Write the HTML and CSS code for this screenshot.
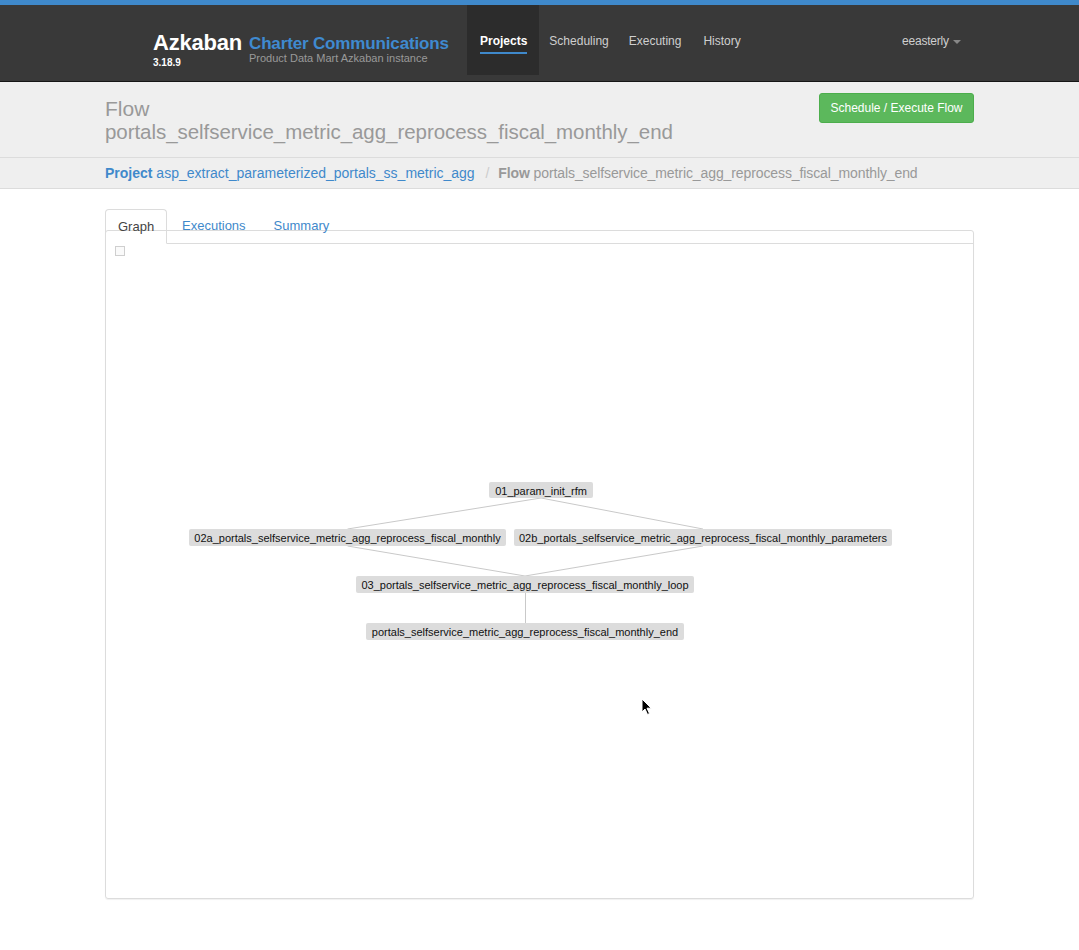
FILE: index.html
```html
<!DOCTYPE html>
<html>
<head>
<meta charset="utf-8">
<title>Azkaban Flow</title>
<link rel="stylesheet" href="styles.css">
</head>
<body>
<div class="topbar"></div>
<nav class="navbar">
  <div class="nav-inner">
    <div class="brand">
      <div class="brand-col1">
        <div class="brand-name">Azkaban</div>
        <div class="brand-version">3.18.9</div>
      </div>
      <div class="brand-col2">
        <div class="brand-company">Charter Communications</div>
        <div class="brand-desc">Product Data Mart Azkaban instance</div>
      </div>
    </div>
    <ul class="nav-links">
      <li class="nav-item active"><span class="nav-label">Projects</span></li>
      <li class="nav-item"><span class="nav-label">Scheduling</span></li>
      <li class="nav-item"><span class="nav-label">Executing</span></li>
      <li class="nav-item"><span class="nav-label">History</span></li>
    </ul>
    <div class="nav-user">eeasterly <span class="caret"></span></div>
  </div>
</nav>
<header class="page-header">
  <div class="container header-row">
    <div class="header-title">
      <div class="title-kind">Flow</div>
      <div class="title-name">portals_selfservice_metric_agg_reprocess_fiscal_monthly_end</div>
    </div>
    <button class="btn-success">Schedule / Execute Flow</button>
  </div>
</header>
<div class="breadcrumb-bar">
  <div class="container breadcrumb">
    <a class="crumb-link"><strong>Project</strong> asp_extract_parameterized_portals_ss_metric_agg</a>
    <span class="crumb-divider">/</span>
    <span class="crumb-current"><strong>Flow</strong> portals_selfservice_metric_agg_reprocess_fiscal_monthly_end</span>
  </div>
</div>
<main class="container content">
  <div class="graph-panel">
    <div class="tabs">
      <div class="tab active">Graph</div>
      <div class="tab">Executions</div>
      <div class="tab">Summary</div>
      <div class="tab-filler"></div>
    </div>
    <div class="toggle-box"></div>
    <svg class="graph" width="869" height="669" viewBox="105 230 869 669" xmlns="http://www.w3.org/2000/svg">
      <g class="edges" stroke="#c9c9c9" stroke-width="1" fill="none">
        <line x1="541" y1="498" x2="347.5" y2="529"/>
        <line x1="541" y1="498" x2="703" y2="529"/>
        <line x1="347.5" y1="546" x2="525" y2="576"/>
        <line x1="703" y1="546" x2="525" y2="576"/>
        <line x1="525.5" y1="593" x2="525.5" y2="623"/>
      </g>
      <g class="nodes">
        <rect x="489" y="482" width="104" height="16" rx="2" fill="#dcdcdc"/>
        <text x="541" y="494.5" text-anchor="middle">01_param_init_rfm</text>
        <rect x="189" y="529" width="317" height="17" rx="2" fill="#dcdcdc"/>
        <text x="347.5" y="541.5" text-anchor="middle">02a_portals_selfservice_metric_agg_reprocess_fiscal_monthly</text>
        <rect x="514" y="529" width="378" height="17" rx="2" fill="#dcdcdc"/>
        <text x="703" y="541.5" text-anchor="middle">02b_portals_selfservice_metric_agg_reprocess_fiscal_monthly_parameters</text>
        <rect x="356" y="576" width="338" height="17" rx="2" fill="#dcdcdc"/>
        <text x="525" y="588.5" text-anchor="middle">03_portals_selfservice_metric_agg_reprocess_fiscal_monthly_loop</text>
        <rect x="366" y="623" width="318" height="17" rx="2" fill="#dcdcdc"/>
        <text x="525" y="635.5" text-anchor="middle">portals_selfservice_metric_agg_reprocess_fiscal_monthly_end</text>
      </g>
    </svg>
    <svg class="cursor" width="12" height="18" viewBox="0 0 12 18" xmlns="http://www.w3.org/2000/svg">
      <path d="M1 1 L1 14 L4 11 L6.5 16.5 L8.5 15.5 L6 10.2 L10.2 10.2 Z" fill="#000" stroke="#fff" stroke-width="1" stroke-linejoin="round"/>
    </svg>
  </div>
</main>
</body>
</html>
```
FILE: styles.css
```css
* { box-sizing: border-box; }
html, body { margin: 0; padding: 0; background: #fff; }
body {
  font-family: "Liberation Sans", Arial, Helvetica, sans-serif;
  color: #333;
  width: 1079px;
  height: 950px;
  overflow: hidden;
}
.topbar { height: 5px; background: #3f89cb; }
.navbar {
  height: 77px;
  background: #393939;
  border-bottom: 1px solid #161616;
}
.nav-inner {
  width: 869px;
  margin: 0 auto;
  height: 76px;
  display: flex;
  align-items: flex-start;
  padding-left: 48px;
  padding-right: 13px;
}
.brand { display: flex; width: 314px; }
.brand-col1 { padding-top: 26px; width: 96px; }
.brand-name {
  color: #fff; font-weight: bold; font-size: 22px; line-height: 24px; letter-spacing: -0.2px;
}
.brand-version {
  color: #fff; font-weight: bold; font-size: 10px; line-height: 12px; margin-top: 2px;
}
.brand-col2 { padding-top: 31px; }
.brand-company {
  color: #3f8ad0; font-weight: bold; font-size: 17px; line-height: 15px; white-space: nowrap; letter-spacing: -0.15px;
}
.brand-desc { color: #999; font-size: 11px; line-height: 12px; white-space: nowrap; margin-top: 1px; }
.nav-links { list-style: none; margin: 0; padding: 0; display: flex; }
.nav-item {
  height: 70px;
  padding-top: 29px;
  font-size: 12px;
  line-height: 14px;
  color: #cfcfcf;
}
.nav-item.active {
  background: #2c2c2c; color: #fff; font-weight: bold;
  padding-left: 13px; padding-right: 12px;
}
.nav-item.active .nav-label {
  display: inline-block;
  padding-bottom: 4px;
  border-bottom: 2px solid #3f89cb;
}
.nav-item:nth-child(2) { padding-left: 10px; padding-right: 12px; }
.nav-item:nth-child(3) { padding-left: 8px; padding-right: 12px; }
.nav-item:nth-child(4) { padding-left: 10px; padding-right: 12px; }
.nav-user {
  margin-left: auto;
  padding-top: 29px;
  font-size: 12px;
  line-height: 14px;
  color: #cfcfcf;
  letter-spacing: -0.2px;
}
.caret {
  display: inline-block;
  width: 0; height: 0;
  margin-left: 1px;
  vertical-align: middle;
  border-top: 4px solid #888;
  border-left: 4px solid transparent;
  border-right: 4px solid transparent;
}
.container { width: 869px; margin: 0 auto; }
.page-header {
  background: #efefef;
  border-bottom: 1px solid #dcdcdc;
  height: 76px;
}
.header-row {
  display: flex;
  justify-content: space-between;
  align-items: flex-start;
  padding-top: 11px;
}
.header-title { padding-top: 5px; color: #999; }
.title-kind { font-size: 21px; line-height: 22px; }
.title-name { font-size: 20.5px; line-height: 23px; letter-spacing: -0.05px; }
.btn-success {
  width: 155px;
  height: 30px;
  background: #5cb85c;
  border: 1px solid #4cae4c;
  border-radius: 3px;
  color: #fff;
  font-family: "Liberation Sans", Arial, sans-serif;
  font-size: 12px;
  padding: 0;
}
.breadcrumb-bar {
  background: #efefef;
  border-bottom: 1px solid #dcdcdc;
  height: 31px;
}
.breadcrumb {
  padding-top: 5px;
  font-size: 14px;
  line-height: 20px;
  white-space: nowrap;
}
.crumb-link { color: #3f89cb; }
.crumb-divider { color: #ccc; padding: 0 5px 0 7px; }
.crumb-current { color: #999; letter-spacing: -0.1px; }
.content { padding-top: 41px; }
.graph-panel {
  position: relative;
  height: 669px;
  border: 1px solid #dcdcdc;
  border-radius: 3px;
  box-shadow: 0 1px 1px rgba(0,0,0,0.06);
}
.tabs {
  display: flex;
  margin-top: -22px;
  margin-left: -1px;
  margin-right: -1px;
  height: 35px;
  position: relative;
}
.tab {
  font-size: 13px;
  line-height: 18px;
  padding: 8px 12px 0 12px;
  color: #3f89cb;
  border-bottom: 1px solid #dcdcdc;
}
.tab.active {
  color: #444;
  border: 1px solid #dcdcdc;
  border-bottom-color: transparent;
  border-radius: 4px 4px 0 0;
  width: 62px;
  padding-left: 12px;
}
.tab:nth-child(2) { padding-left: 15px; }
.tab:nth-child(3) { padding-left: 16px; }
.tab-filler { flex: 1; border-bottom: 1px solid #dcdcdc; }
.toggle-box {
  width: 10px;
  height: 10px;
  margin: 2px 0 0 9px;
  border: 1px solid #cfcfcf;
  background: #fafafa;
}
.graph {
  position: absolute;
  left: -1px;
  top: -1px;
}
.graph text {
  font-family: "Liberation Sans", Arial, sans-serif;
  font-size: 11px;
  fill: #111;
}
.cursor {
  position: absolute;
  left: 535px;
  top: 467px;
}
```
